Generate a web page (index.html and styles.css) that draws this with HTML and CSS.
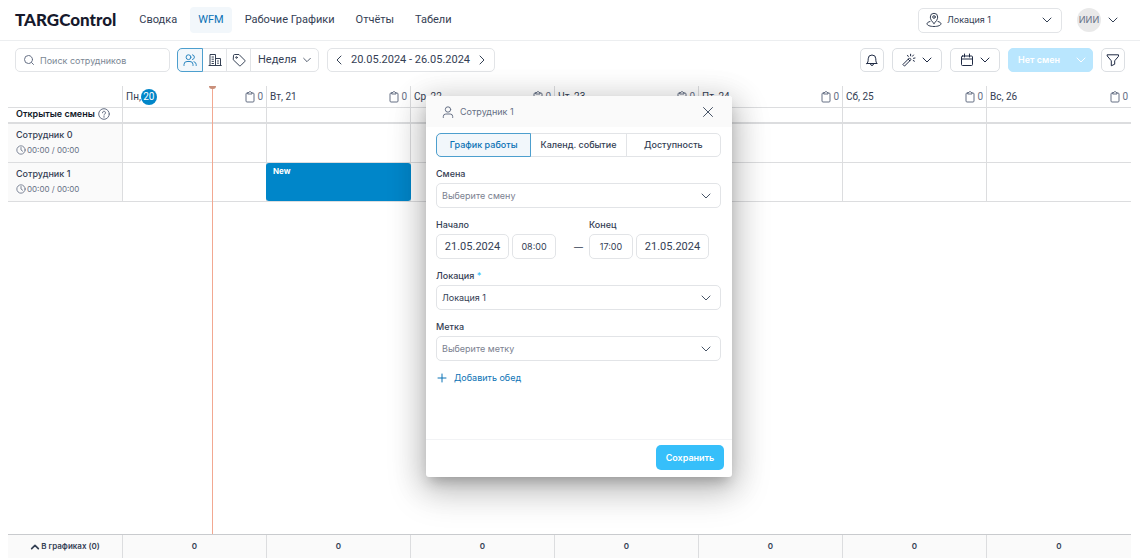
FILE: index.html
```html
<!DOCTYPE html>
<html lang="ru">
<head>
<meta charset="utf-8">
<title>TARGControl – WFM</title>
<meta name="viewport" content="width=device-width, initial-scale=1">
<link rel="stylesheet" href="styles.css">
</head>
<body>
<svg class="sprite" aria-hidden="true">
  <symbol id="chevron" viewBox="0 0 12 12"><path d="M2 4l4 4 4-4"/></symbol>
  <symbol id="clipboard" viewBox="0 0 12 12"><path d="M4 2H3a1 1 0 0 0-1 1v7a1 1 0 0 0 1 1h6a1 1 0 0 0 1-1V3a1 1 0 0 0-1-1H8M4 1.500h1L5.500.600h1L7 1.500h1v1.500H4z"/></symbol>
  <symbol id="clock" viewBox="0 0 12 12"><circle cx="6" cy="6" r="5"/><path d="M6 3v3l2 1.500"/></symbol>
</svg>

<header class="topbar">
  <a class="logo" href="#">TARGControl</a>
  <nav class="nav">
    <a href="#">Сводка</a>
    <a class="active" href="#" aria-current="page">WFM</a>
    <a href="#">Рабочие Графики</a>
    <a href="#">Отчёты</a>
    <a href="#">Табели</a>
  </nav>
  <div class="field location">
    <svg class="icon icon-lg" viewBox="0 0 16 16"><path d="M8 11.500C6 9.500 4.300 7.500 4.300 5a3.700 3.700 0 0 1 7.400 0c0 2.500-1.700 4.500-3.700 6.500z"/><circle cx="8" cy="5" r="1.300"/><path d="M4 9.500c-1.700.5-3 1.200-3 2.200 0 1.600 3 2.800 7 2.800s7-1.200 7-2.800c0-1-1.300-1.700-3-2.200"/></svg>
    <select aria-label="Локация"><option>Локация 1</option></select>
    <svg class="icon chev"><use href="#chevron"/></svg>
  </div>
  <button class="user" aria-label="Профиль"><span class="avatar">ИИИ</span><svg class="icon"><use href="#chevron"/></svg></button>
</header>

<div class="toolbar">
  <label class="field search">
    <svg class="icon" viewBox="0 0 12 12"><circle cx="5.500" cy="5.500" r="4"/><path d="M8.500 8.500L10.500 10.500"/></svg>
    <input type="text" placeholder="Поиск сотрудников" aria-label="Поиск сотрудников">
  </label>
  <div class="group">
    <button class="selected" aria-label="Сотрудники"><svg class="icon icon-md" viewBox="0 0 14 14"><circle cx="5.500" cy="4.200" r="2.400"/><path d="M1 12.500V11.500a3 3 0 0 1 3-3h3a3 3 0 0 1 3 3v1M9.500 1.800a2.400 2.400 0 0 1 0 4.700M11 8.700a3 3 0 0 1 2.200 2.800v1"/></svg></button>
    <button aria-label="Подразделения"><svg class="icon icon-md" viewBox="0 0 14 14"><path d="M1 12.500h12.300M2 12.500v-11h5.500v11M7.500 5.500h5v7M4 4h1.500M4 6.200h1.500M4 8.400h1.500M4 10.500h1.500M9.500 8h1M9.500 10.200h1"/></svg></button>
    <button aria-label="Метки"><svg class="icon icon-md" viewBox="0 0 14 14"><path d="M1.500 2.500a1 1 0 0 1 1-1H7l5.700 5.700a1 1 0 0 1 0 1.400l-4 4a1 1 0 0 1-1.400 0L1.500 7z"/><circle cx="4.500" cy="4.500" r=".8"/></svg></button>
    <div class="period">
      <select aria-label="Период"><option>Неделя</option></select>
      <svg class="icon icon-sm chev"><use href="#chevron"/></svg>
    </div>
  </div>
  <div class="range">
    <button aria-label="Назад"><svg class="icon" viewBox="0 0 12 12"><path d="M8 2L4 6l4 4"/></svg></button>
    <span>20.05.2024 - 26.05.2024</span>
    <button aria-label="Вперёд"><svg class="icon" viewBox="0 0 12 12"><path d="M4 2l4 4-4 4"/></svg></button>
  </div>
  <div class="actions">
    <button class="btn square" aria-label="Уведомления"><svg class="icon icon-md" viewBox="0 0 14 14"><path d="M1.800 10.500h10.400c-1-.8-1.400-1.700-1.400-4.700a3.800 3.800 0 0 0-7.600 0c0 3-.4 3.900-1.400 4.700zM5.500 11a1.500 1.500 0 0 0 3 0"/></svg></button>
    <button class="btn" aria-label="Автозаполнение"><svg class="icon icon-md" viewBox="0 0 14 14"><path d="M1.200 11.200l6.300-6.300 1.600 1.600-6.300 6.300zM6.200 6.200l1.600 1.600M5.500 2.300l.8 1.200M8.600 1.200v1.600M11.500 2l-1 1.200M13 5l-1.500.3M12.400 8.200l-1.200-.7"/></svg><svg class="icon"><use href="#chevron"/></svg></button>
    <button class="btn" aria-label="Календарь"><svg class="icon icon-md" viewBox="0 0 14 14"><path d="M2.500 3h9a1 1 0 0 1 1 1v7.500a1 1 0 0 1-1 1h-9a1 1 0 0 1-1-1V4a1 1 0 0 1 1-1zM1.500 6h11M4.500 1v3M9.500 1v3"/></svg><svg class="icon"><use href="#chevron"/></svg></button>
    <button class="btn shifts" disabled><span>Нет смен</span><svg class="icon"><use href="#chevron"/></svg></button>
    <button class="btn square" aria-label="Фильтр"><svg class="icon icon-md" viewBox="0 0 14 14"><path d="M1.500 1.800h11v1.500L8.700 7.800v3.400l-3.400 1.600v-5L1.500 3.300z"/></svg></button>
  </div>
</div>

<main class="schedule">
  <table class="grid">
    <thead>
      <tr>
        <td class="corner"></td>
        <th scope="col"><div class="day"><span>Пн,<b class="today">20</b></span><span class="count"><svg class="icon"><use href="#clipboard"/></svg>0</span></div></th>
        <th scope="col"><div class="day"><span>Вт, 21</span><span class="count"><svg class="icon"><use href="#clipboard"/></svg>0</span></div></th>
        <th scope="col"><div class="day"><span>Ср, 22</span><span class="count"><svg class="icon"><use href="#clipboard"/></svg>0</span></div></th>
        <th scope="col"><div class="day"><span>Чт, 23</span><span class="count"><svg class="icon"><use href="#clipboard"/></svg>0</span></div></th>
        <th scope="col"><div class="day"><span>Пт, 24</span><span class="count"><svg class="icon"><use href="#clipboard"/></svg>0</span></div></th>
        <th scope="col"><div class="day"><span>Сб, 25</span><span class="count"><svg class="icon"><use href="#clipboard"/></svg>0</span></div></th>
        <th scope="col"><div class="day"><span>Вс, 26</span><span class="count"><svg class="icon"><use href="#clipboard"/></svg>0</span></div></th>
      </tr>
    </thead>
    <tbody>
      <tr class="open">
        <th scope="row"><div class="open-title">Открытые смены <svg class="icon" viewBox="0 0 12 12"><circle cx="6" cy="6" r="5.300"/><path d="M4.500 4.800a1.500 1.500 0 1 1 2.300 1.200c-.6.400-.8.600-.8 1.200M6 8.500v.8"/></svg></div></th>
        <td></td><td></td><td></td><td></td><td></td><td></td><td></td>
      </tr>
      <tr class="person">
        <th scope="row"><div class="name">Сотрудник 0</div><div class="hours"><svg class="icon icon-sm"><use href="#clock"/></svg>00:00 / 00:00</div></th>
        <td></td><td></td><td></td><td></td><td></td><td></td><td></td>
      </tr>
      <tr class="person">
        <th scope="row"><div class="name">Сотрудник 1</div><div class="hours"><svg class="icon icon-sm"><use href="#clock"/></svg>00:00 / 00:00</div></th>
        <td></td><td><div class="shift">New</div></td><td></td><td></td><td></td><td></td><td></td>
      </tr>
    </tbody>
  </table>
  <div class="now"></div>
</main>

<footer class="totals">
  <button><svg class="icon icon-sm" viewBox="0 0 12 12"><path d="M2 8l4-4 4 4"/></svg>В графиках (0)</button>
  <span>0</span><span>0</span><span>0</span><span>0</span><span>0</span><span>0</span><span>0</span>
</footer>

<section class="dialog" role="dialog" aria-labelledby="dialog-title">
  <div class="dialog-head">
    <svg class="icon" viewBox="0 0 12 12"><circle cx="6" cy="3.500" r="2.700"/><path d="M1.300 11.500V10.500a2.500 2.500 0 0 1 2.500-2.500h4.400a2.500 2.500 0 0 1 2.500 2.500v1"/></svg>
    <h2 id="dialog-title">Сотрудник 1</h2>
    <button aria-label="Закрыть"><svg class="icon" viewBox="0 0 12 12"><path d="M1.500 1.500l9 9M10.500 1.500l-9 9"/></svg></button>
  </div>
  <form class="dialog-body">
    <div class="tabs">
      <button type="button" class="selected">График работы</button>
      <button type="button">Календ. событие</button>
      <button type="button">Доступность</button>
    </div>
    <div class="row">
      <label for="shift">Смена</label>
      <div class="field"><select id="shift" class="empty"><option>Выберите смену</option></select><svg class="icon chev"><use href="#chevron"/></svg></div>
    </div>
    <div class="times">
      <div class="row">
        <label for="start">Начало</label>
        <div class="pair"><input id="start" class="date" type="text" value="21.05.2024"><input class="time" type="text" value="08:00" aria-label="Время начала"></div>
      </div>
      <span class="dash">—</span>
      <div class="row">
        <label for="end">Конец</label>
        <div class="pair"><input id="end" class="time" type="text" value="17:00"><input class="date" type="text" value="21.05.2024" aria-label="Дата конца"></div>
      </div>
    </div>
    <div class="row">
      <label for="place">Локация <span class="required">*</span></label>
      <div class="field"><select id="place"><option>Локация 1</option></select><svg class="icon chev"><use href="#chevron"/></svg></div>
    </div>
    <div class="row">
      <label for="tag">Метка</label>
      <div class="field"><select id="tag" class="empty"><option>Выберите метку</option></select><svg class="icon chev"><use href="#chevron"/></svg></div>
    </div>
    <button type="button" class="add"><svg class="icon" viewBox="0 0 12 12"><path d="M6 2v8M2 6h8"/></svg>Добавить обед</button>
  </form>
  <div class="dialog-foot"><button class="save">Сохранить</button></div>
</section>
</body>
</html>
```

FILE: styles.css
```css
* { box-sizing: border-box; }

body {
  margin: 0;
  min-height: 100vh;
  display: flex;
  flex-direction: column;
  position: relative;
  background: #fff;
  color: #344054;
  font: 9px/12px Inter, "Noto Sans", sans-serif;
}

button, input, select {
  font: inherit;
  color: inherit;
  margin: 0;
  padding: 0;
  border: 0;
  background: none;
  outline: 0;
  appearance: none;
  min-width: 0;
}

a { color: inherit; text-decoration: none; }

.sprite { position: absolute; width: 0; height: 0; }

.icon {
  width: 12px;
  height: 12px;
  flex: none;
  fill: none;
  stroke: currentColor;
  stroke-width: 1;
  stroke-linecap: round;
  stroke-linejoin: round;
}
.icon-sm { width: 10px; height: 10px; }
.icon-md { width: 14px; height: 14px; }
.icon-lg { width: 16px; height: 16px; }
.chev { pointer-events: none; }

.field {
  display: flex;
  align-items: center;
  height: 25px;
  padding: 0 8px 0 5px;
  border: 1px solid #e2e4e7;
  border-radius: 5px;
  background: #fff;
}
.field select, .field input { flex: 1; height: 100%; }

/* Top bar */
.topbar {
  display: flex;
  align-items: center;
  height: 41px;
  padding: 0 21px 0 15px;
  border-bottom: 1px solid #eceef0;
}
.logo {
  font: 900 17px/24px Lato, sans-serif;
  color: #16192c;
}
.nav {
  display: flex;
  flex: 1;
  margin-left: 15px;
  gap: 5px;
  font: 11px/26px Roboto, sans-serif;
}
.nav a { padding: 0 8px; border-radius: 4px; }
.nav .active { background: #f2f7fb; color: #0b72b5; }
.location { width: 144px; gap: 5px; padding-left: 7px; }
.user { display: flex; align-items: center; gap: 6px; margin-left: 15px; }
.avatar {
  width: 24px;
  border-radius: 12px;
  background: #e9e9e9;
  color: #667085;
  line-height: 24px;
}

/* Toolbar */
.toolbar {
  display: flex;
  align-items: center;
  height: 45px;
  padding: 0 15px 7px;
}
.search { width: 155px; gap: 5px; padding-left: 7px; height: 24px; color: #667085; }
.search input::placeholder { color: #7b8794; opacity: 1; }
.group {
  display: flex;
  height: 24px;
  margin-left: 7px;
  border: 1px solid #e2e4e7;
  border-radius: 5px;
}
.group button {
  display: grid;
  place-items: center;
  width: 24px;
  border-right: 1px solid #e2e4e7;
}
.group .selected {
  width: 26px;
  margin: -1px 0 -1px -1px;
  border: 1px solid #4d9fce;
  border-radius: 5px 0 0 5px;
  background: #f2f7fb;
  color: #2b86c0;
}
.period {
  display: flex;
  align-items: center;
  gap: 4px;
  padding: 0 6px 0 7px;
  font: 11px/22px Roboto, sans-serif;
}
.period select { width: 40px; }
.range {
  display: flex;
  align-items: center;
  gap: 6px;
  height: 24px;
  margin-left: 8px;
  padding: 0 6px 0 5px;
  border: 1px solid #e2e4e7;
  border-radius: 5px;
  font: 11px/22px Roboto, sans-serif;
}
.range button { display: grid; }
.actions { display: flex; gap: 8px; margin-left: auto; color: #1f2a44; }
.btn {
  display: flex;
  align-items: center;
  justify-content: center;
  gap: 5px;
  width: 50px;
  height: 24px;
  border: 1px solid #dcdfe3;
  border-radius: 5px;
}
.square { width: 24px; }
.shifts {
  justify-content: space-between;
  width: 85px;
  padding: 0 5px 0 9px;
  border-color: #b9e6fe;
  background: #b9e6fe;
  color: #fff;
  font-weight: 600;
}

/* Schedule */
.schedule { position: relative; flex: 1; margin: 0 9px 0 8px; }
.grid {
  width: 100%;
  table-layout: fixed;
  border-spacing: 0;
}
.grid th, .grid td {
  padding: 0;
  font-weight: 400;
  text-align: left;
  border-right: 1px solid #dcdddf;
  border-bottom: 1px solid #dcdddf;
}
.grid th:last-child, .grid td:last-child { border-right: 0; }
.grid .corner { width: 115px; }
.day {
  display: flex;
  align-items: center;
  justify-content: space-between;
  height: 21px;
  padding: 0 3px;
  font: 10px/12px Roboto, sans-serif;
}
.today {
  display: inline-block;
  width: 16px;
  border-radius: 8px;
  background: #0086c9;
  color: #fff;
  font-weight: 400;
  line-height: 16px;
  text-align: center;
}
.count { display: flex; align-items: center; gap: 1px; color: #667085; }
.open th, .open td { border-bottom: 2px solid #dcdddf; }
.open-title {
  display: flex;
  align-items: center;
  gap: 3px;
  height: 14px;
  padding: 0 0 2px 8px;
  font-weight: 600;
  color: #101828;
}
.open-title .icon, .hours { color: #667085; }
.person th { height: 39px; padding: 0 0 2px 8px; background: #fafafa; }
.person td { position: relative; }
.name { margin-bottom: 3px; font-weight: 500; }
.hours { display: flex; align-items: center; gap: 1px; font-size: 8px; }
.shift {
  position: absolute;
  inset: 0 -1px 0 -1px;
  padding: 2px 7px;
  border-radius: 3px;
  background: #0086c9;
  color: #fff;
  font-size: 8px;
  font-weight: 700;
}
.now {
  position: absolute;
  top: 0;
  bottom: 0;
  left: 204px;
  width: 1px;
  background: #f2a891;
}
.now::before {
  content: "";
  position: absolute;
  top: 0;
  left: -3px;
  width: 7px;
  height: 3px;
  border-radius: 0 0 4px 4px;
  background: #c98f7a;
}

/* Totals */
.totals {
  display: grid;
  grid-template-columns: 115px repeat(7, 1fr);
  margin: 0 9px 0 8px;
  border-top: 1px solid #c9cbce;
  background: #fafafa;
  font-size: 8px;
  font-weight: 600;
  line-height: 23px;
  text-align: center;
}
.totals > * { border-right: 1px solid #dcdddf; }
.totals > :last-child { border-right: 0; }
.totals button { display: flex; align-items: center; justify-content: center; gap: 1px; }
.totals .icon { stroke-width: 2; }

/* Shift dialog */
.dialog {
  position: absolute;
  top: 96px;
  left: calc(50% - 144px);
  width: 306px;
  height: 381px;
  display: flex;
  flex-direction: column;
  border-radius: 3px;
  background: #fff;
  box-shadow: 0 8px 12px -4px rgba(0, 0, 0, .22), 0 12px 36px 4px rgba(0, 0, 0, .18), 0 6px 30px 5px rgba(0, 0, 0, .12);
}
.dialog-head {
  display: flex;
  align-items: center;
  gap: 6px;
  height: 31px;
  padding: 0 18px 0 16px;
  border-radius: 3px 3px 0 0;
  background: #fafafa;
  color: #667085;
}
.dialog-head h2 { flex: 1; margin: 0; font: inherit; }
.dialog-head button { display: grid; color: #475467; }
.dialog-body {
  display: flex;
  flex-direction: column;
  flex: 1;
  gap: 11px;
  padding: 6px 11px 0 10px;
}
.dialog-body .chev { color: #475467; }
.tabs {
  display: grid;
  grid-template-columns: repeat(3, 1fr);
  height: 24px;
  border: 1px solid #e2e4e7;
  border-radius: 5px;
  font-weight: 500;
}
.tabs button + button + button { border-left: 1px solid #e2e4e7; }
.tabs .selected {
  margin: -1px 0 -1px -1px;
  border: 1px solid #4d9fce;
  border-radius: 5px 0 0 5px;
  background: #f2f7fb;
  color: #0b72b5;
}
.row { display: flex; flex-direction: column; gap: 3px; }
.row label { font-weight: 500; }
.row .empty { color: #7b8190; }
.required { color: #36bffa; }
.times { display: flex; align-items: flex-end; }
.pair { display: flex; gap: 3px; }
.pair input {
  height: 25px;
  border: 1px solid #e2e4e7;
  border-radius: 5px;
  text-align: center;
}
.pair .date { width: 73px; font: 11px/23px Roboto, sans-serif; }
.pair .time { width: 44px; }
.dash { width: 33px; padding-left: 18px; line-height: 25px; }
.add {
  display: flex;
  align-items: center;
  align-self: flex-start;
  gap: 6px;
  color: #0b72b5;
}
.dialog-foot {
  display: flex;
  justify-content: flex-end;
  padding: 5px 8px 7px;
  border-top: 1px solid #f2f3f5;
}
.save {
  width: 68px;
  height: 25px;
  border-radius: 5px;
  background: #36bffa;
  color: #fff;
  font-weight: 600;
}
```
